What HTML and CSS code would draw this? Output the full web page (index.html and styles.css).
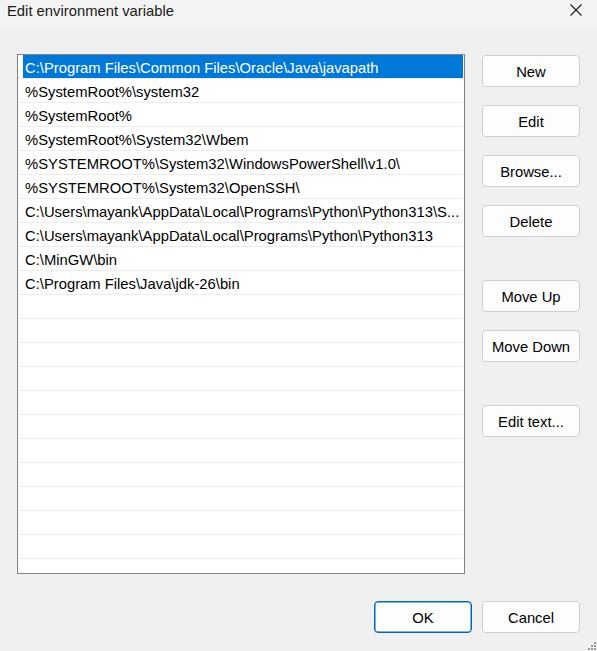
FILE: index.html
```html
<!DOCTYPE html>
<html lang="en">
<head>
<meta charset="utf-8">
<title>Edit environment variable</title>
<link rel="stylesheet" href="styles.css">
</head>
<body>
<div class="dialog">
  <div class="titlebar">
    <span class="title">Edit environment variable</span>
    <span class="close" aria-label="Close">
      <svg width="12" height="12" viewBox="0 0 12 12"><path d="M0.5 0.5 L11.5 11.5 M11.5 0.5 L0.5 11.5" stroke="#1a1a1a" stroke-width="1.1" fill="none"/></svg>
    </span>
  </div>
  <div class="content">
    <div class="main">
      <div class="listbox">
        <div class="row selected"><span class="label">C:\Program Files\Common Files\Oracle\Java\javapath</span></div>
        <div class="row"><span class="label">%SystemRoot%\system32</span></div>
        <div class="row"><span class="label">%SystemRoot%</span></div>
        <div class="row"><span class="label">%SystemRoot%\System32\Wbem</span></div>
        <div class="row"><span class="label">%SYSTEMROOT%\System32\WindowsPowerShell\v1.0\</span></div>
        <div class="row"><span class="label">%SYSTEMROOT%\System32\OpenSSH\</span></div>
        <div class="row"><span class="label">C:\Users\mayank\AppData\Local\Programs\Python\Python313\S...</span></div>
        <div class="row"><span class="label">C:\Users\mayank\AppData\Local\Programs\Python\Python313</span></div>
        <div class="row"><span class="label">C:\MinGW\bin</span></div>
        <div class="row"><span class="label">C:\Program Files\Java\jdk-26\bin</span></div>
        <div class="row"></div><div class="row"></div><div class="row"></div><div class="row"></div>
        <div class="row"></div><div class="row"></div><div class="row"></div><div class="row"></div>
        <div class="row"></div><div class="row"></div><div class="row"></div><div class="row"></div>
      </div>
      <div class="actions">
        <button class="btn">New</button>
        <button class="btn">Edit</button>
        <button class="btn">Browse...</button>
        <button class="btn">Delete</button>
        <button class="btn gap-lg">Move Up</button>
        <button class="btn">Move Down</button>
        <button class="btn gap-xl">Edit text...</button>
      </div>
    </div>
    <div class="footer">
      <button class="btn default">OK</button>
      <button class="btn">Cancel</button>
    </div>
  </div>
  <span class="grip">
    <svg width="10" height="10" viewBox="0 0 10 10" fill="#9a9a9a">
      <rect x="7" y="1" width="2" height="2"/>
      <rect x="4" y="4" width="2" height="2"/><rect x="7" y="4" width="2" height="2"/>
      <rect x="1" y="7" width="2" height="2"/><rect x="4" y="7" width="2" height="2"/><rect x="7" y="7" width="2" height="2"/>
    </svg>
  </span>
</div>
</body>
</html>
```
FILE: styles.css
```css
* { box-sizing: border-box; }

html, body {
  margin: 0;
  padding: 0;
}

body {
  width: 597px;
  height: 651px;
  overflow: hidden;
  background: #f0f0f0;
  font-family: "Liberation Sans", Arial, sans-serif;
  font-size: 14.8px;
  color: #000;
}

.dialog {
  position: relative;
  width: 597px;
  height: 651px;
  display: flex;
  flex-direction: column;
}

.titlebar {
  height: 28px;
  background: #f3f3f3;
  display: flex;
  align-items: flex-start;
  justify-content: space-between;
  padding: 2px 15px 0 7px;
}

.title {
  line-height: 18px;
  color: #1a1a1a;
}

.close {
  display: flex;
  margin-top: 2px;
}

.content {
  flex: 1;
  display: flex;
  flex-direction: column;
  padding: 26px 17px 0 17px;
}

.main {
  display: flex;
  gap: 17px;
}

.listbox {
  width: 448px;
  height: 520px;
  background: #fff;
  border: 1px solid #828282;
  overflow: hidden;
}

.row {
  height: 24px;
  border-bottom: 1px solid #ececec;
  margin-right: 1px;
  padding: 0 0 0 5px;
  white-space: nowrap;
  overflow: hidden;
}

.label {
  display: block;
  height: 23px;
  padding: 4px 0 0 2px;
  line-height: 19px;
  overflow: hidden;
}

.row.selected .label {
  background: #0078d7;
  color: #fff;
}

.actions {
  display: flex;
  flex-direction: column;
  gap: 18px;
  padding-top: 1px;
}

.btn {
  width: 98px;
  height: 32px;
  padding: 1px 0 0;
  font-family: inherit;
  font-size: 14.8px;
  color: #000;
  background: #fdfdfd;
  border: 1px solid #d0d0d0;
  border-radius: 4px;
}

.btn.gap-lg { margin-top: 25px; }
.btn.gap-xl { margin-top: 25px; }

.btn.default {
  border: 1px solid #0067c0;
  box-shadow: inset 0 0 0 0.5px #0067c0;
}

.footer {
  display: flex;
  justify-content: flex-end;
  gap: 10px;
  margin-top: 27px;
  padding-right: 0;
}

.grip {
  position: absolute;
  right: 0;
  bottom: 0;
  display: flex;
}
```
